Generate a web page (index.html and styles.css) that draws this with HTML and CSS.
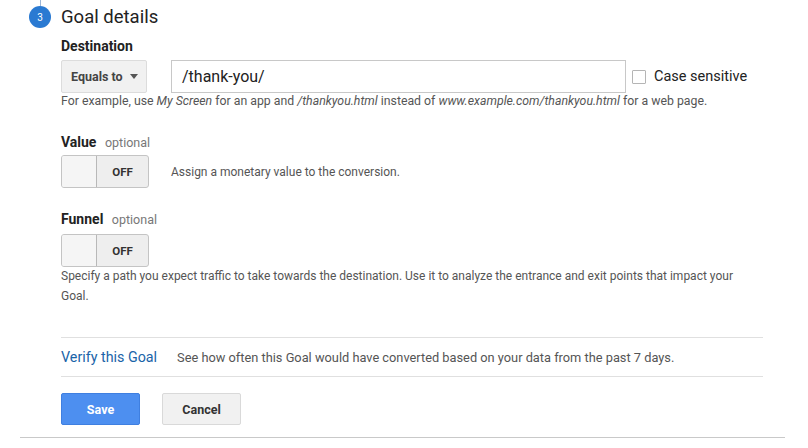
FILE: index.html
```html
<!DOCTYPE html>
<html>
<head>
<meta charset="utf-8">
<link rel="stylesheet" href="styles.css">
</head>
<body>
<div class="page">
  <div class="step">
    <div class="rail">
      <div class="rail-line"></div>
      <div class="num">3</div>
    </div>
    <div class="content">
      <h2 class="title">Goal details</h2>

      <div class="label">Destination</div>
      <div class="dest-row">
        <div class="select">Equals to <span class="caret"></span></div>
        <div class="input">/thank-you/</div>
        <label class="check"><span class="box"></span>Case sensitive</label>
      </div>
      <p class="help">For example, use <i>My Screen</i> for an app and <i>/thankyou.html</i> instead of <i>www.example.com/thankyou.html</i> for a web page.</p>

      <div class="label value-label">Value <span class="opt">optional</span></div>
      <div class="toggle-row first">
        <div class="toggle"><span class="knob"></span><span class="state">OFF</span></div>
        <span class="desc">Assign a monetary value to the conversion.</span>
      </div>

      <div class="label funnel-label">Funnel <span class="opt">optional</span></div>
      <div class="toggle-row second">
        <div class="toggle"><span class="knob"></span><span class="state">OFF</span></div>
      </div>
      <p class="para">Specify a path you expect traffic to take towards the destination. Use it to analyze the entrance and exit points that impact your Goal.</p>

      <div class="verify">
        <a class="link">Verify this Goal</a>
        <span class="vdesc">See how often this Goal would have converted based on your data from the past 7 days.</span>
      </div>

      <div class="actions">
        <button class="btn save">Save</button>
        <button class="btn cancel">Cancel</button>
      </div>
    </div>
  </div>
  <div class="bottom-line"></div>
</div>
</body>
</html>
```
FILE: styles.css
```css
* { box-sizing: border-box; }
html, body { margin: 0; padding: 0; background: #fff; }
body { font-family: Roboto, "Liberation Sans", Arial, sans-serif; color: #222; }
.page { width: 808px; height: 448px; overflow: hidden; }
.step { display: flex; padding-left: 29px; }
.rail { width: 22px; display: flex; flex-direction: column; align-items: center; }
.rail-line { width: 1px; height: 6px; background: #9db7d9; }
.num {
  width: 22px; height: 22px; border-radius: 50%;
  background: #2a7ad2; color: #fff; font-size: 10px;
  display: flex; align-items: center; justify-content: center;
}
.content { margin-left: 10px; width: 702px; }
.title { margin: 5px 0 0; font-size: 18.5px; font-weight: 400; line-height: 24px; color: #222; }
.label { font-size: 14px; font-weight: 700; color: #222; line-height: 16px; margin-top: 9px; }
.value-label { margin-top: 25px; }
.funnel-label { margin-top: 23px; }
.opt { font-size: 12.5px; font-weight: 400; color: #777; margin-left: 5px; }
.dest-row { display: flex; align-items: center; margin-top: 6px; height: 33px; }
.select {
  width: 86px; height: 33px; background: #f1f1f1; border: 1px solid #dcdcdc; border-radius: 2px;
  font-size: 12.5px; font-weight: 700; color: #444;
  display: flex; align-items: center; padding-left: 9px;
}
.caret {
  display: inline-block; margin-left: 7px; width: 0; height: 0;
  border-left: 4px solid transparent; border-right: 4px solid transparent; border-top: 5px solid #555;
}
.input {
  margin-left: 24px; width: 455px; height: 33px; border: 1px solid #c8c8c8;
  font-size: 16px; color: #222; display: flex; align-items: center; padding-left: 10px;
}
.check { display: flex; align-items: center; margin-left: 6px; font-size: 14.5px; color: #222; }
.box { width: 14px; height: 14px; border: 1px solid #b5b5b5; margin-right: 8px; border-radius: 1px; }
.help { margin: 0; font-size: 12.3px; color: #555; line-height: 16px; white-space: nowrap; }
.toggle-row { display: flex; align-items: center; }
.toggle-row.first { margin-top: 4px; }
.toggle-row.second { margin-top: 6px; }
.toggle {
  width: 88px; height: 33px; border: 1px solid #c4c4c4; border-radius: 3px;
  background: #eeeeee; display: flex; overflow: hidden;
}
.knob { width: 35px; height: 100%; background: #f5f5f5; border-right: 1px solid #b8b8b8; }
.state { flex: 1; display: flex; align-items: center; justify-content: center; font-size: 11.5px; font-weight: 700; color: #333; }
.desc { font-size: 12px; color: #555; margin-left: 22px; }
.para { margin: 0; font-size: 12px; color: #555; line-height: 19.5px; width: 690px; }
.verify {
  margin-top: 31px; border-top: 1px solid #e0e0e0; border-bottom: 1px solid #e0e0e0;
  display: flex; align-items: center; height: 40px;
}
.link { font-size: 14.3px; color: #1a64a8; }
.vdesc { margin-left: 20px; font-size: 12.8px; color: #555; }
.actions { display: flex; gap: 22px; margin-top: 16px; }
.btn {
  height: 32px; width: 79px; border-radius: 2px; font-family: inherit; font-size: 12.5px; font-weight: 700;
}
.save { background: #4d8ff0; border: 1px solid #3f7fe0; color: #fff; }
.cancel { background: #f1f1f1; border: 1px solid #d9d9d9; color: #333; }
.bottom-line { margin-top: 12px; margin-left: 20px; width: 765px; height: 1px; background: #c9c9c9; }
```
